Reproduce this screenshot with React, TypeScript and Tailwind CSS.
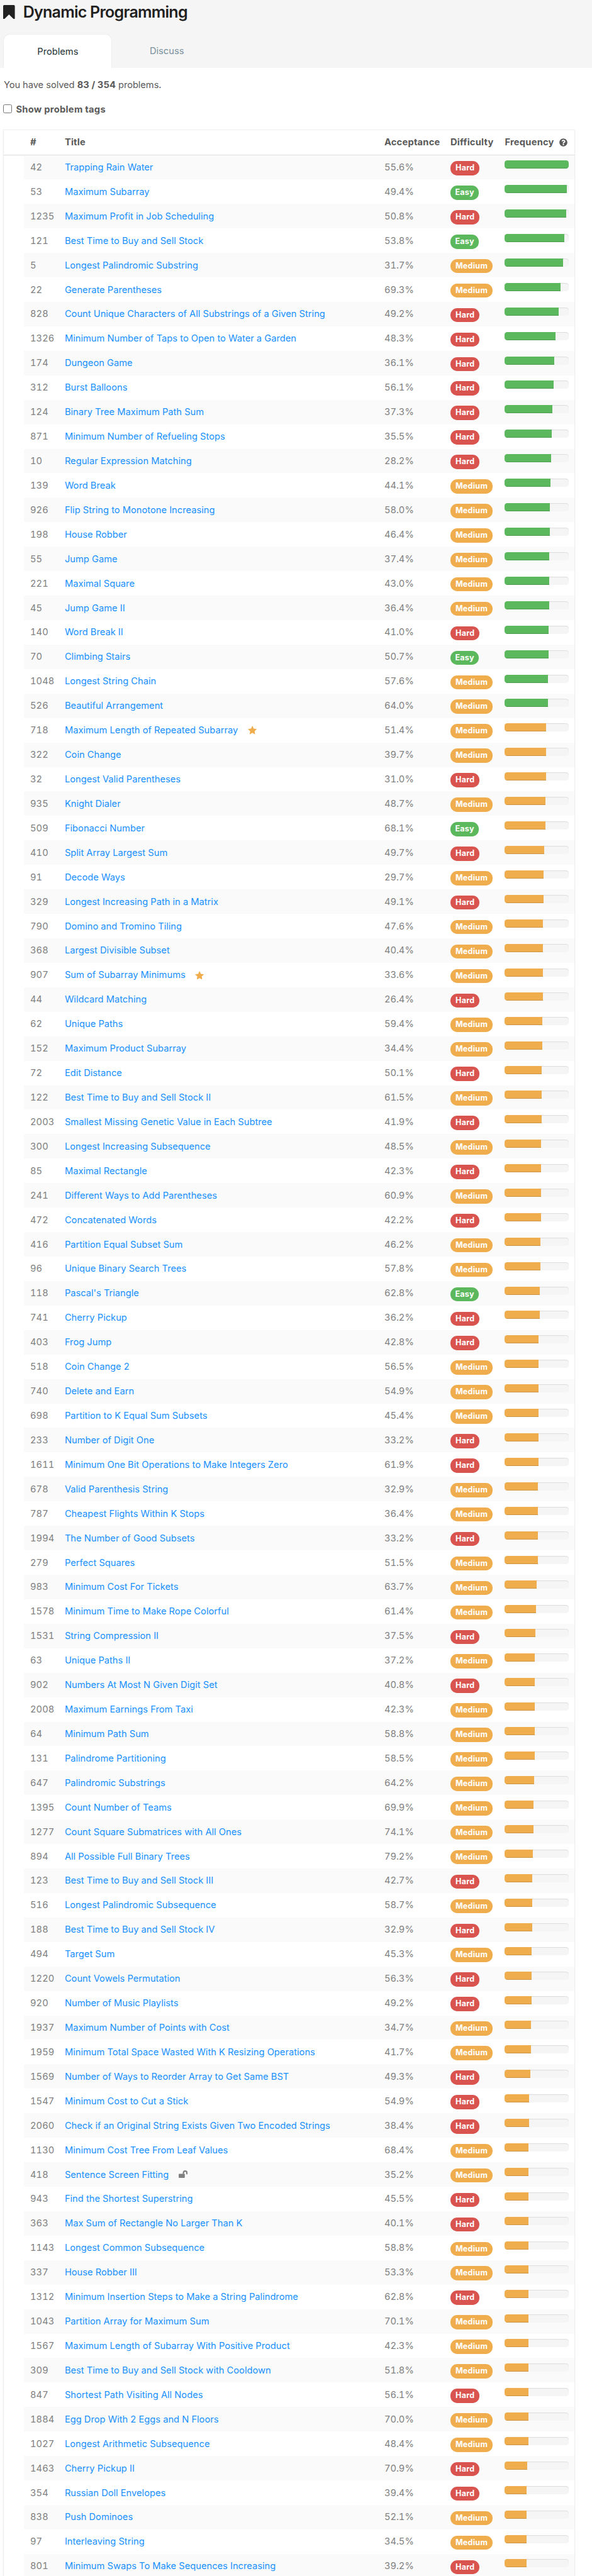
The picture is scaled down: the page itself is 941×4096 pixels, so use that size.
import { FaQuestionCircle } from "react-icons/fa";

type Level = "Easy" | "Medium" | "Hard";
type Problem = [id: number, title: string, acceptance: string, level: Level, frequency: number, mark?: "star" | "unlock"];

const E: Level = "Easy";
const M: Level = "Medium";
const H: Level = "Hard";

const problems: Problem[] = [
  [42, "Trapping Rain Water", "55.6%", H, 100],
  [53, "Maximum Subarray", "49.4%", E, 97],
  [1235, "Maximum Profit in Job Scheduling", "50.8%", H, 95.9],
  [121, "Best Time to Buy and Sell Stock", "53.8%", E, 92.5],
  [5, "Longest Palindromic Substring", "31.7%", M, 90.6],
  [22, "Generate Parentheses", "69.3%", M, 87.2],
  [828, "Count Unique Characters of All Substrings of a Given String", "49.2%", H, 84],
  [1326, "Minimum Number of Taps to Open to Water a Garden", "48.3%", H, 79.4],
  [174, "Dungeon Game", "36.1%", H, 77.7],
  [312, "Burst Balloons", "56.1%", H, 76.5],
  [124, "Binary Tree Maximum Path Sum", "37.3%", H, 74.2],
  [871, "Minimum Number of Refueling Stops", "35.5%", H, 73.6],
  [10, "Regular Expression Matching", "28.2%", H, 72.4],
  [139, "Word Break", "44.1%", M, 71.2],
  [926, "Flip String to Monotone Increasing", "58.0%", M, 70],
  [198, "House Robber", "46.4%", M, 70],
  [55, "Jump Game", "37.4%", M, 69],
  [221, "Maximal Square", "43.0%", M, 69],
  [45, "Jump Game II", "36.4%", M, 69],
  [140, "Word Break II", "41.0%", H, 68.3],
  [70, "Climbing Stairs", "50.7%", E, 68.3],
  [1048, "Longest String Chain", "57.6%", M, 67],
  [526, "Beautiful Arrangement", "64.0%", M, 67],
  [718, "Maximum Length of Repeated Subarray", "51.4%", M, 64.8, "star"],
  [322, "Coin Change", "39.7%", M, 64.8],
  [32, "Longest Valid Parentheses", "31.0%", H, 64.8],
  [935, "Knight Dialer", "48.7%", M, 63],
  [509, "Fibonacci Number", "68.1%", E, 63],
  [410, "Split Array Largest Sum", "49.7%", H, 61.8],
  [91, "Decode Ways", "29.7%", M, 60.6],
  [329, "Longest Increasing Path in a Matrix", "49.1%", H, 60.6],
  [790, "Domino and Tromino Tiling", "47.6%", M, 59.5],
  [368, "Largest Divisible Subset", "40.4%", M, 59.5],
  [907, "Sum of Subarray Minimums", "33.6%", M, 59.5, "star"],
  [44, "Wildcard Matching", "26.4%", H, 59.5],
  [62, "Unique Paths", "59.4%", M, 58.4],
  [152, "Maximum Product Subarray", "34.4%", M, 58.4],
  [72, "Edit Distance", "50.1%", H, 57.7],
  [122, "Best Time to Buy and Sell Stock II", "61.5%", M, 57.7],
  [2003, "Smallest Missing Genetic Value in Each Subtree", "41.9%", H, 57.7],
  [300, "Longest Increasing Subsequence", "48.5%", M, 56.6],
  [85, "Maximal Rectangle", "42.3%", H, 56.6],
  [241, "Different Ways to Add Parentheses", "60.9%", M, 56.6],
  [472, "Concatenated Words", "42.2%", H, 56.6],
  [416, "Partition Equal Subset Sum", "46.2%", M, 55.4],
  [96, "Unique Binary Search Trees", "57.8%", M, 55.4],
  [118, "Pascal's Triangle", "62.8%", E, 54.2],
  [741, "Cherry Pickup", "36.2%", H, 54.2],
  [403, "Frog Jump", "42.8%", H, 52.4],
  [518, "Coin Change 2", "56.5%", M, 52.4],
  [740, "Delete and Earn", "54.9%", M, 52.4],
  [698, "Partition to K Equal Sum Subsets", "45.4%", M, 52.4],
  [233, "Number of Digit One", "33.2%", H, 52.4],
  [1611, "Minimum One Bit Operations to Make Integers Zero", "61.9%", H, 52.4],
  [678, "Valid Parenthesis String", "32.9%", M, 51.2],
  [787, "Cheapest Flights Within K Stops", "36.4%", M, 51.2],
  [1994, "The Number of Good Subsets", "33.2%", H, 51.2],
  [279, "Perfect Squares", "51.5%", M, 51.2],
  [983, "Minimum Cost For Tickets", "63.7%", M, 50],
  [1578, "Minimum Time to Make Rope Colorful", "61.4%", M, 48.9],
  [1531, "String Compression II", "37.5%", H, 47.8],
  [63, "Unique Paths II", "37.2%", M, 47.1],
  [902, "Numbers At Most N Given Digit Set", "40.8%", H, 47.1],
  [2008, "Maximum Earnings From Taxi", "42.3%", M, 47.1],
  [64, "Minimum Path Sum", "58.8%", M, 47.1],
  [131, "Palindrome Partitioning", "58.5%", M, 47.1],
  [647, "Palindromic Substrings", "64.2%", M, 45.9],
  [1395, "Count Number of Teams", "69.9%", M, 44.8],
  [1277, "Count Square Submatrices with All Ones", "74.1%", M, 44.8],
  [894, "All Possible Full Binary Trees", "79.2%", M, 43.6],
  [123, "Best Time to Buy and Sell Stock III", "42.7%", H, 42.5],
  [516, "Longest Palindromic Subsequence", "58.7%", M, 42.5],
  [188, "Best Time to Buy and Sell Stock IV", "32.9%", H, 42.5],
  [494, "Target Sum", "45.3%", M, 41.8],
  [1220, "Count Vowels Permutation", "56.3%", H, 41.8],
  [920, "Number of Music Playlists", "49.2%", H, 41.8],
  [1937, "Maximum Number of Points with Cost", "34.7%", M, 40.6],
  [1959, "Minimum Total Space Wasted With K Resizing Operations", "41.7%", M, 40.6],
  [1569, "Number of Ways to Reorder Array to Get Same BST", "49.3%", H, 39.5],
  [1547, "Minimum Cost to Cut a Stick", "54.9%", H, 38.3],
  [2060, "Check if an Original String Exists Given Two Encoded Strings", "38.4%", H, 38.3],
  [1130, "Minimum Cost Tree From Leaf Values", "68.4%", M, 37.1],
  [418, "Sentence Screen Fitting", "35.2%", M, 37.1, "unlock"],
  [943, "Find the Shortest Superstring", "45.5%", H, 37.1],
  [363, "Max Sum of Rectangle No Larger Than K", "40.1%", H, 37.1],
  [1143, "Longest Common Subsequence", "58.8%", M, 37.1],
  [337, "House Robber III", "53.3%", M, 37.1],
  [1312, "Minimum Insertion Steps to Make a String Palindrome", "62.8%", H, 37.1],
  [1043, "Partition Array for Maximum Sum", "70.1%", M, 36.5],
  [1567, "Maximum Length of Subarray With Positive Product", "42.3%", M, 36.5],
  [309, "Best Time to Buy and Sell Stock with Cooldown", "51.8%", M, 36.5],
  [847, "Shortest Path Visiting All Nodes", "56.1%", H, 36.5],
  [1884, "Egg Drop With 2 Eggs and N Floors", "70.0%", M, 36.5],
  [1027, "Longest Arithmetic Subsequence", "48.4%", M, 36.5],
  [1463, "Cherry Pickup II", "70.9%", H, 35.4],
  [354, "Russian Doll Envelopes", "39.4%", H, 34.2],
  [838, "Push Dominoes", "52.1%", M, 34.2],
  [97, "Interleaving String", "34.5%", M, 34.2],
  [801, "Minimum Swaps To Make Sequences Increasing", "39.2%", H, 34.2],
];

const badgeStyle: Record<Level, string> = {
  Easy: "w-[45.4px] bg-[#5cb85c]",
  Medium: "w-[67.1px] bg-[#f0ad4e]",
  Hard: "w-[46.5px] bg-[#d9534f]",
};

const columns = "grid grid-cols-[32px_54.8px_508px_105.1px_86.5px_1fr]";

function Bookmark() {
  return (
    <svg className="h-[22.5px] w-[18.6px]" viewBox="0 0 34 41" fill="#212121">
      <path d="M3 0H31Q34 0 34 3V38.5Q34 41 32 41Q31 41 30 40L17 27.5L4 40Q3 41 2 41Q0 41 0 38.5V3Q0 0 3 0Z" />
    </svg>
  );
}

function Star() {
  return (
    <svg className="h-[13.7px] w-[14.3px]" viewBox="0 0 26 25" fill="#f0ad4e">
      <path d="M13 0L16.9 8.2L26 9.5L19.4 15.8L21 25L13 20.6L5 25L6.6 15.8L0 9.5L9.1 8.2Z" />
    </svg>
  );
}

function Unlock() {
  return (
    <svg className="-mt-px h-[11.9px] w-[14.1px]" viewBox="0 0 26 22" fill="#808080">
      <rect y="10" width="18" height="12" rx="1.5" />
      <path d="M14 10.5V7a5 5 0 0 1 10 0V11.5" fill="none" stroke="#808080" strokeWidth="4" />
    </svg>
  );
}

function Row({ problem, index }: { problem: Problem; index: number }) {
  const [id, title, acceptance, level, frequency, mark] = problem;
  const striped = index % 2 === 0;
  return (
    <div className={`${columns} h-[38.927px] text-[#808080] ${striped ? "bg-[#fafafa]" : "bg-white"}`}>
      <div className={index === 0 ? "mt-[2px] bg-white" : "bg-white"} />
      <div className="flex items-center pl-[9.7px] tabular-nums">{id}</div>
      <div className="flex items-center gap-[15.6px] whitespace-nowrap pl-[9.7px]">
        <a className="text-[#1890ff]">{title}</a>
        {mark === "star" && <Star />}
        {mark === "unlock" && <Unlock />}
      </div>
      <div className="flex items-center pl-[9.7px] tabular-nums">{acceptance}</div>
      <div className="pl-[9.7px] pt-[9.7px]">
        <span
          className={`block h-[22.6px] rounded-[10.8px] text-center text-[12.6px] font-bold leading-[21.2px] tracking-[0.22px] text-white ${badgeStyle[level]}`}
        >
          {level}
        </span>
      </div>
      <div className="pl-[9.7px] pt-[8.65px]">
        <div className="h-[13px] w-[101.7px] overflow-hidden rounded-[4.3px] bg-[#f5f5f5] shadow-[inset_0_1px_1px_rgba(0,0,0,0.1)]">
          <div
            className={`h-full shadow-[inset_0_-1px_0_rgba(0,0,0,0.15)] ${frequency > 66 ? "bg-[#5cb85c]" : "bg-[#f0ad4e]"}`}
            style={{ width: `${frequency}%` }}
          />
        </div>
      </div>
    </div>
  );
}

export default function App() {
  return (
    <div className="h-[4096px] w-[941px] overflow-hidden bg-white font-['Inter','Liberation_Sans',sans-serif] text-[14.7px] leading-[20px] text-[#5a5a5a]">
      <header className="flex h-[108px] flex-col justify-between bg-[#f5f5f5] pl-[5.4px]">
        <div className="flex pt-[7.6px]">
          <Bookmark />
          <h1 className="-mt-[3.5px] ml-[12.8px] text-[25px] font-semibold leading-[30px] tracking-[-0.75px] text-[#212121]">Dynamic Programming</h1>
        </div>
        <nav className="flex h-[54px]">
          <div className="flex w-[173px] justify-center rounded-t-[10.8px] border border-b-0 border-[#eeeeee] bg-white pt-[17px] text-[#263238]">
            Problems
          </div>
          <div className="pl-[59.5px] pt-[17px] text-[#78909c]">Discuss</div>
        </nav>
      </header>
      <p className="mt-[17px] pl-[5.9px] tracking-[-0.06px]">
        You have solved <b className="font-bold tracking-[0.1px]">83 / 354</b> problems.
      </p>
      <label className="mt-[19px] flex items-center pl-[5.4px] font-bold">
        <span className="-mt-[3px] mr-[6px] h-[14px] w-[14px] rounded-[2.5px] border border-[#767676] bg-white" />
        <span className="tracking-[0.28px]">Show problem tags</span>
      </label>
      <main className="ml-[5.4px] mt-[21.5px] w-[908.4px]">
        <div className="border border-[#eeeeee] bg-white shadow-[0_1px_3px_rgba(0,0,0,0.06)]">
          <div className={`${columns} h-[40px] items-center border-b border-[#dddddd] font-bold tracking-[0.22px]`}>
            <span />
            <span className="pl-[9.7px]">#</span>
            <span className="pl-[9.7px]">Title</span>
            <span className="pl-[9.7px]">Acceptance</span>
            <span className="pl-[9.7px]">Difficulty</span>
            <span className="flex items-center whitespace-nowrap pl-[9.7px]">
              Frequency
              <FaQuestionCircle className="ml-[8px] h-[13px] w-[13px]" />
            </span>
          </div>
          {problems.map((problem, index) => (
            <Row key={problem[0]} problem={problem} index={index} />
          ))}
        </div>
      </main>
    </div>
  );
}
